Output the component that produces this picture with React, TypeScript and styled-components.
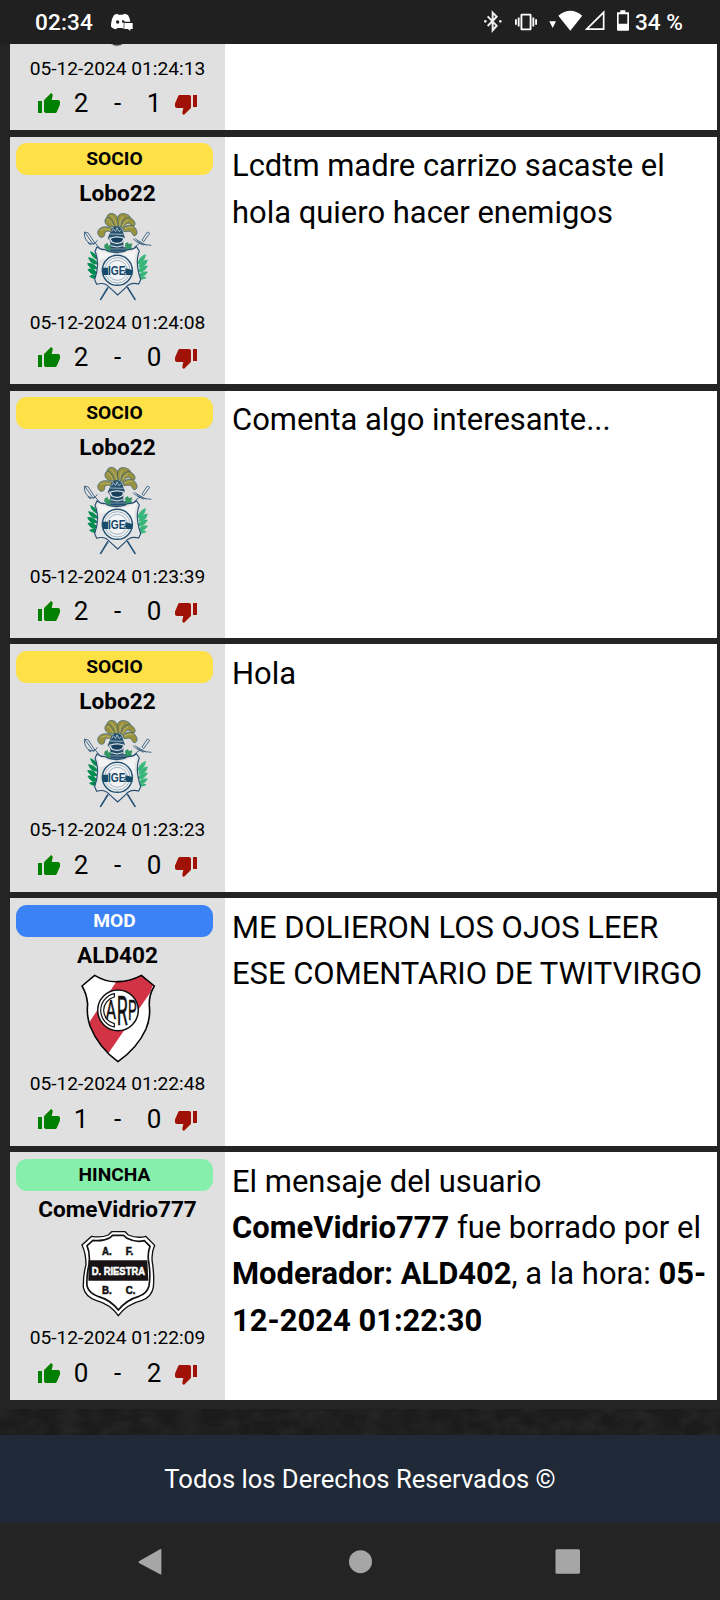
import React from "react";
import styled, { createGlobalStyle } from "styled-components";
import { MdThumbDown, MdThumbUp, MdVibration } from "react-icons/md";

const Global = createGlobalStyle`
  html, body { margin: 0; padding: 0; background: #242424; }
  *, *::before, *::after { box-sizing: border-box; }
  body { font-family: Roboto, "Liberation Sans", sans-serif; color: #000; }
  svg { display: block; flex: none; }
`;

const Screen = styled.div`
  width: 720px;
  height: 1600px;
  display: flex;
  flex-direction: column;
  overflow: hidden;
  background: #242424;
`;

const StatusBar = styled.header`
  height: 44px;
  flex: none;
  display: flex;
  align-items: center;
  padding: 0 38px 0 35px;
  background: #202020;
  color: #fff;
  font-size: 22.6px;
  font-weight: 500;
`;

const Clock = styled.span`
  width: 76px;
  letter-spacing: 0.1px;
`;

const StatusIcons = styled.div`
  margin-left: auto;
  display: flex;
  align-items: center;
`;

const Vibrate = styled(MdVibration)`
  width: 22px;
  height: 22px;
  margin-right: 12.3px;
`;

const StatusGlyph = styled.svg<{ $gap: number }>`
  margin-right: ${(p) => p.$gap}px;
  height: 24px;
`;

const Battery = styled.span`
  width: 47px;
  white-space: nowrap;
`;

const Thread = styled.main`
  flex: none;
  height: 1365px;
  padding: 0 3px 9px 10px;
  display: flex;
  flex-direction: column;
  gap: 6.391px;
`;

const Post = styled.article<{ $cut?: boolean }>`
  flex: none;
  height: ${(p) => (p.$cut ? "86.36px" : "247.47px")};
  display: flex;
  align-items: flex-end;
  overflow: hidden;
  background: #fff;
`;

const Author = styled.aside`
  width: 215px;
  height: 247.47px;
  flex: none;
  display: flex;
  flex-direction: column;
  align-items: center;
  background: #e0e0e0;
  padding-top: 6.6px;
`;

const tones = {
  SOCIO: { bg: "#fee047", fg: "#000" },
  MOD: { bg: "#3b82f6", fg: "#fff" },
  HINCHA: { bg: "#86efac", fg: "#000" },
};
type Role = keyof typeof tones;

const Badge = styled.div<{ $role: Role }>`
  width: 197px;
  height: 32px;
  flex: none;
  margin-right: 6px;
  border-radius: 11px;
  background: ${(p) => tones[p.$role].bg};
  color: ${(p) => tones[p.$role].fg};
  font-size: 19.2px;
  font-weight: 700;
  line-height: 32.6px;
  text-align: center;
`;

const UserName = styled.div`
  height: 31.4px;
  flex: none;
  font-size: 22.6px;
  font-weight: 700;
  line-height: 37px;
`;

const Crest = styled.svg`
  width: 85px;
  height: 98px;
`;

const Stamp = styled.time`
  height: 34px;
  flex: none;
  font-size: 19.2px;
  line-height: 35.2px;
  white-space: nowrap;
`;

const Votes = styled.div`
  height: 36.8px;
  flex: none;
  display: flex;
  align-items: center;
  justify-content: center;
  font-size: 26px;
`;

const Count = styled.span`
  width: 36.5px;
  text-align: center;
`;

const Thumb = styled.span<{ $down?: boolean }>`
  margin: 2.2px ${(p) => (p.$down ? "0 0 1.25px" : "1.75px 0 -0.5px")};
  color: ${(p) => (p.$down ? "#a01208" : "#008000")};
  font-size: 24px;
  filter: drop-shadow(0.7px 0.5px 0 rgba(240, 190, 90, 0.6));
`;

const Body = styled.p`
  align-self: flex-start;
  flex: 1;
  margin: 0;
  padding: 6.5px 4px 0 7px;
  font-size: 30.95px;
  line-height: 46.36px;
`;

const Texture = styled.svg`
  width: 720px;
  height: 26px;
  background: #1b1b1b;
`;

const Footer = styled.footer`
  height: 88px;
  flex: none;
  display: flex;
  align-items: center;
  justify-content: center;
  background: #202937;
  color: #fff;
  font-size: 25.6px;
`;

const NavBar = styled.nav`
  height: 77px;
  flex: none;
  display: flex;
  align-items: center;
  padding-left: 138px;
`;

const NavIcon = styled.svg<{ $gap?: number }>`
  width: 26px;
  height: 28px;
  margin-right: ${(p) => p.$gap ?? 0}px;
  fill: #a6a6a6;
`;

function GimnasiaCrest() {
  return (
    <Crest viewBox="0 5 255 294">
      <g stroke="#245377" strokeWidth="5" strokeLinecap="round">
        <path d="M98 248L77 282M158 247L180 282" />
      </g>
      <g fill="none" stroke="#315878" strokeWidth="2.6">
        <path d="M28 80l12 3 20 31-5 3-20-28zM43 113q15 8 24-8M49 118q-7 1-10-7M28 82q-1 22 17 33M59 111l17 20" />
        <path d="M217 80l7 4-18 25-5-5zM174 100q11 12 24 15 15 4 31 5M181 99q9 15 24 21M198 112q-15 7-22 17M186 104l26 15" />
      </g>
      <g fill="#98923e" stroke="#245377" strokeWidth="1.8">
        <path d="M119 66C91 42 90 30 107 24c19 0 26 18 24 39z" />
        <path d="M130 62C124 37 128 22 149 25c22 5 20 17 9 17-17-3-18 11-20 21z" />
        <path d="M136 65c8-28 25-36 40-20 12 17-3 21-9 12-10-9-17 4-25 12z" />
        <path d="M143 70c18-19 37-11 43 8 2 16-12 17-15 6-4-9-16-5-24-5z" />
        <path d="M113 70C89 57 69 67 68 82c3 20 22 16 21 4 1-11 13-9 20-6z" />
        <path d="M113 65C94 65 85 51 92 39c9-8 22 3 26 24z" />
      </g>
      <path d="M96 40q13 9 20 23M108 30q13 11 18 32M143 32q-10 12-8 30M160 43q-13 5-18 20M174 66q-14-3-26 6M77 75q16-9 31 0" fill="none" stroke="#c7c18b" strokeWidth="2" />
      <path d="M106 81q3-17 19-19 16 2 19 19l6 16-5 10v19h12v13h-63v-13h12v-18l-8-9z" fill="#24506d" />
      <path d="M105 86l40 1M110 79l5-9 7 9 4-12 6 12 7-6" fill="none" stroke="#c2cfd6" strokeWidth="2.4" />
      <path d="M104 99q22-9 44 0l-7 11q-15 8-30 0z" fill="#163e5d" stroke="#e4e8ea" strokeWidth="4" />
      <path d="M108 121q19 8 36 0" fill="none" stroke="#e4e8ea" strokeWidth="3" />
      <path d="M100 131h52" fill="none" stroke="#9db3be" strokeWidth="2" />
      <path d="M88 118l10-6 2 9 8-4-2 14 2 8-16 1 2-9-6-3zM150 115l9-5 2 6 11-2-3 12 4 4-7 4-1 9-12-4z" fill="#349763" />
      <g fill="#008d50" stroke="#008d50" strokeWidth="3">
        <path d="M47 139q16 5 20 22-15-3-20-22zM41 157q22 4 25 19-18 1-25-19zM38 175q19-2 28 14-17 7-28-14zM39 192q17-5 27 12-15 9-27-12zM44 213q13-9 25-1-7 14-25 1z" />
        <path d="M211 148q-20 8-22 28 20-7 22-28zM217 164q-23 5-25 21 19 2 25-21zM217 182q-23 2-28 15 15 9 28-15zM217 200q-19-2-25 10 13 9 25-10zM213 217q-14-6-23 0 8 8 23 0z" fill="#36b678" stroke="#36b678" />
      </g>
      <path d="M66 125q10 8 25 8 10 8 33 9 24-1 34-9 18 0 26-9l9 13q-14 34 4 86l-6 13q-26-7-39 11l-24 22q-13-12-24-22-15-18-39-10l-6-14q17-47 1-85z" fill="#e4e4e4" stroke="#264d74" strokeWidth="3.4" />
      <path d="M68 132q28 15 58 14 33 1 60-17-11 35-6 60-35-13-56-25-27-8-52 0 0-17-4-32z" fill="#f7f7f7" opacity=".82" />
      <circle cx="127" cy="195" r="45" fill="#f2f4f5" stroke="#265374" strokeWidth="4.5" />
      <g fill="none" stroke="#8097a7" strokeWidth="2.2">
        <circle cx="127" cy="195" r="38" /><circle cx="127" cy="195" r="30" />
      </g>
      <path d="M83 187h18v22H85q-5-9-2-22zM151 189q11 2 21 6v14h-36q15-4 15-20z" fill="#164b6a" />
      <text x="99" y="210" fill="#16476a" stroke="#f2f4f5" strokeWidth="3" paintOrder="stroke" fontFamily="Liberation Sans" fontWeight="700" fontSize="38" textLength="53" lengthAdjust="spacingAndGlyphs">IGE</text>
    </Crest>
  );
}

const riverOutline =
  "M246 289L284 257Q318 278 354 276 391 275 424 257L463 289Q446 317 448 348 452 384 438 418 413 474 354 516 296 474 270 409 259 375 263 344 260 311 246 289Z";

function RiverCrest() {
  return (
    <Crest viewBox="225 235 255 294">
      <defs><clipPath id="river"><path d={riverOutline} /></clipPath></defs>
      <path d={riverOutline} fill="#fff" />
      <path d="M367 249L480 230 450 310 322 495 260 475 253 420Z" fill="#d23445" clipPath="url(#river)" />
      <path d={riverOutline} fill="none" stroke="#050505" strokeWidth="4.8" strokeLinejoin="round" />
      <circle cx="354" cy="362" r="61" fill="#fff" stroke="#111" strokeWidth="4.5" />
      <path d="M343 312a51 51 0 0 0 0 100v-10a41 41 0 0 1 0-80z" fill="#fff" stroke="#111" strokeWidth="3.6" />
      <g fill="#111" stroke="#111" strokeWidth="1.5" fontFamily="Roboto" fontWeight="400">
        <text x="317" y="387" fontSize="76" textLength="31" lengthAdjust="spacingAndGlyphs">A</text>
        <text x="350" y="406" fontSize="123" textLength="33" lengthAdjust="spacingAndGlyphs">R</text>
        <text x="384" y="391" fontSize="84" textLength="26" lengthAdjust="spacingAndGlyphs">P</text>
      </g>
    </Crest>
  );
}

function RiestraCrest() {
  return (
    <Crest viewBox="225 231 255 294">
      <path d="M335 260h40l10 10q28 11 52 4l27 27q-12 26-6 58 5 36 2 68-5 28-34 39-47 12-71 46-23-34-67-46-33-12-38-39-1-35 8-68 0-34-12-59l29-26q28 5 50-4z" fill="#fff" stroke="#111" strokeWidth="4" />
      <path d="M338 271h33l10 9q25 13 52 7l17 17q-9 24-3 53 5 36 0 66-6 22-30 31-37 10-62 41-25-31-59-40-29-10-35-32-2-31 6-64 4-34-6-57l18-16q29 4 51-8z" fill="#fff" stroke="#111" strokeWidth="5" />
      <path d="M266 346h176l3 61H265z" fill="#181315" />
      <g fontFamily="Liberation Sans" fontWeight="700" fill="#111" stroke="#111" strokeWidth="1.6" fontSize="30">
        <text x="306" y="331" textLength="29" lengthAdjust="spacingAndGlyphs">A.</text>
        <text x="377" y="331" textLength="23" lengthAdjust="spacingAndGlyphs">F.</text>
        <text x="306" y="446" textLength="29" lengthAdjust="spacingAndGlyphs">B.</text>
        <text x="377" y="446" textLength="29" lengthAdjust="spacingAndGlyphs">C.</text>
        <text x="275" y="390" fontSize="33" fill="#fff" stroke="#fff" textLength="160" lengthAdjust="spacingAndGlyphs">D. RIESTRA</text>
      </g>
    </Crest>
  );
}

function RoundCrest() {
  return (
    <Crest viewBox="0 0 85 98">
      <ellipse cx="42" cy="84" rx="9" ry="9" fill="#333" stroke="#aaa" />
    </Crest>
  );
}

type PostData = {
  role: Role;
  name: string;
  crest: () => React.JSX.Element;
  time: string;
  up: number;
  down: number;
  cut?: boolean;
  text?: React.ReactNode;
};

const posts: PostData[] = [
  { role: "SOCIO", name: "", crest: RoundCrest, time: "05-12-2024 01:24:13", up: 2, down: 1, cut: true },
  { role: "SOCIO", name: "Lobo22", crest: GimnasiaCrest, time: "05-12-2024 01:24:08", up: 2, down: 0, text: "Lcdtm madre carrizo sacaste el hola quiero hacer enemigos" },
  { role: "SOCIO", name: "Lobo22", crest: GimnasiaCrest, time: "05-12-2024 01:23:39", up: 2, down: 0, text: "Comenta algo interesante..." },
  { role: "SOCIO", name: "Lobo22", crest: GimnasiaCrest, time: "05-12-2024 01:23:23", up: 2, down: 0, text: "Hola" },
  { role: "MOD", name: "ALD402", crest: RiverCrest, time: "05-12-2024 01:22:48", up: 1, down: 0, text: "ME DOLIERON LOS OJOS LEER ESE COMENTARIO DE TWITVIRGO" },
  {
    role: "HINCHA", name: "ComeVidrio777", crest: RiestraCrest, time: "05-12-2024 01:22:09", up: 0, down: 2,
    text: (
      <>
        El mensaje del usuario <b>ComeVidrio777</b> fue borrado por el <b>Moderador: ALD402</b>, a la hora: <b>05-12-2024 01:22:30</b>
      </>
    ),
  },
];

function PostCard({ post }: { post: PostData }) {
  const Shield = post.crest;
  return (
    <Post $cut={post.cut}>
      <Author>
        <Badge $role={post.role}>{post.cut ? "" : post.role}</Badge>
        <UserName>{post.name}</UserName>
        <Shield />
        <Stamp>{post.time}</Stamp>
        <Votes>
          <Thumb><MdThumbUp /></Thumb>
          <Count>{post.up}</Count>
          <Count>-</Count>
          <Count>{post.down}</Count>
          <Thumb $down><MdThumbDown /></Thumb>
        </Votes>
      </Author>
      <Body>{post.text}</Body>
    </Post>
  );
}

export default function App() {
  return (
    <>
      <Global />
      <Screen>
        <StatusBar>
          <Clock>02:34</Clock>
          <svg width="22" height="18" viewBox="333 39 66 54">
            <path d="M342 45l9-4 5 3h12l6-3 10 4q6 10 7 20h-20v21l-5-2h-14l-4 4q-9-1-15-8-1-21 9-35z" fill="#fff" />
            <circle cx="353" cy="66" r="5" fill="#202020" />
            <path d="M367 61q6-1 7 4l-6 4q-4-3-1-8z" fill="#202020" />
            <path d="M373 69h25v18h-7v6l-7-6h-11z" fill="#fff" />
          </svg>
          <StatusIcons>
            <StatusGlyph $gap={12.5} width="18" viewBox="74 30 54 72">
              <path d="M85 49l27 28-12 14V38l12 12-27 28" fill="none" stroke="#eee" strokeWidth="6" />
              <circle cx="78" cy="64" r="4" fill="#eee" /><circle cx="123" cy="64" r="4" fill="#eee" />
            </StatusGlyph>
            <Vibrate />
            <StatusGlyph $gap={2.3} width="7.3" viewBox="267 30 22 72">
              <path d="M268 64h20l-10 20z" fill="#fff" />
            </StatusGlyph>
            <StatusGlyph $gap={2} width="24.6" viewBox="296 30 74 72">
              <path d="M297 47q36-29 72 0l-36 45z" fill="#fff" />
            </StatusGlyph>
            <StatusGlyph $gap={11.7} width="20" viewBox="377 30 60 72">
              <path d="M382 87.500L433 37V87.500Z" fill="none" stroke="#fff" strokeWidth="5" />
            </StatusGlyph>
            <StatusGlyph $gap={6.3} width="12" viewBox="471 30 36 72">
              <path fillRule="evenodd" d="M481 31h15v6h11v52q0 3-3 3h-30q-3 0-3-3V37h10zM476 43v28h26V43z" fill="#fff" />
            </StatusGlyph>
            <Battery>34 %</Battery>
          </StatusIcons>
        </StatusBar>
        <Thread>
          {posts.map((post) => <PostCard key={post.time} post={post} />)}
        </Thread>
        <Texture aria-hidden="true">
          <filter id="grain" x="0" y="0" width="100%" height="100%" colorInterpolationFilters="sRGB">
            <feTurbulence type="fractalNoise" baseFrequency="0.05 0.08" numOctaves={3} seed={4} />
            <feColorMatrix values="0 0 0 0 .15  0 0 0 0 .15  0 0 0 0 .15  2 0 0 0 -.7" />
          </filter>
          <rect width="720" height="26" filter="url(#grain)" />
        </Texture>
        <Footer>Todos los Derechos Reservados ©</Footer>
        <NavBar>
          <NavIcon $gap={183.5} viewBox="0 0 26 28">
            <path d="M22 1.200q1.400-.8 1.400.8v23.500q0 1.500-1.400.8L1 15q-1-1 0-1.700z" />
          </NavIcon>
          <NavIcon $gap={181} viewBox="0 0 26 28"><circle cx="12.500" cy="13.700" r="11.500" /></NavIcon>
          <NavIcon viewBox="0 0 26 28"><rect x=".5" y="1.300" width="24.500" height="24.500" rx="1.500" /></NavIcon>
        </NavBar>
      </Screen>
    </>
  );
}
